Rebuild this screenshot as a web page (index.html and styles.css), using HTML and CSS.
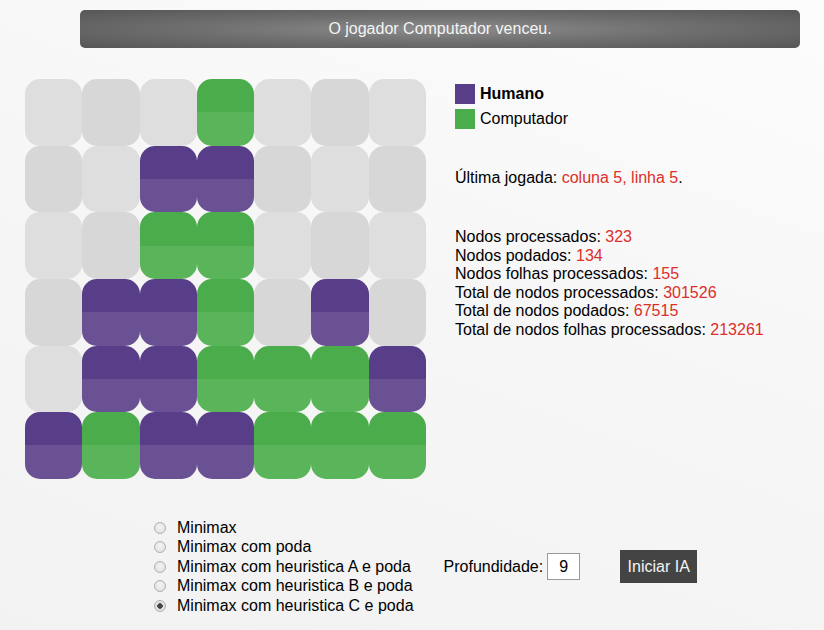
FILE: index.html
```html
<!DOCTYPE html>
<html lang="pt">
<head>
<meta charset="utf-8">
<title>Connect 4</title>
<link rel="stylesheet" href="styles.css">
</head>
<body>
<div class="banner">O jogador Computador venceu.</div>
<div class="main">
  <div class="board">
    <div class="cell e-a"></div><div class="cell e-b"></div><div class="cell e-a"></div><div class="cell g"></div><div class="cell e-a"></div><div class="cell e-b"></div><div class="cell e-a"></div>
    <div class="cell e-b"></div><div class="cell e-a"></div><div class="cell p"></div><div class="cell p"></div><div class="cell e-b"></div><div class="cell e-a"></div><div class="cell e-b"></div>
    <div class="cell e-a"></div><div class="cell e-b"></div><div class="cell g"></div><div class="cell g"></div><div class="cell e-a"></div><div class="cell e-b"></div><div class="cell e-a"></div>
    <div class="cell e-b"></div><div class="cell p"></div><div class="cell p"></div><div class="cell g"></div><div class="cell e-b"></div><div class="cell p"></div><div class="cell e-b"></div>
    <div class="cell e-a"></div><div class="cell p"></div><div class="cell p"></div><div class="cell g"></div><div class="cell g"></div><div class="cell g"></div><div class="cell p"></div>
    <div class="cell p"></div><div class="cell g"></div><div class="cell p"></div><div class="cell p"></div><div class="cell g"></div><div class="cell g"></div><div class="cell g"></div>
  </div>
  <div class="info">
    <div class="legend">
      <div class="legend-row"><span class="swatch swatch-p"></span><b>Humano</b></div>
      <div class="legend-row"><span class="swatch swatch-g"></span>Computador</div>
    </div>
    <div class="last">Última jogada: <span class="red">coluna 5, linha 5</span>.</div>
    <div class="stats">
      <div>Nodos processados: <span class="red">323</span></div>
      <div>Nodos podados: <span class="red">134</span></div>
      <div>Nodos folhas processados: <span class="red">155</span></div>
      <div>Total de nodos processados: <span class="red">301526</span></div>
      <div>Total de nodos podados: <span class="red">67515</span></div>
      <div>Total de nodos folhas processados: <span class="red">213261</span></div>
    </div>
  </div>
</div>
<div class="controls">
  <div class="options">
    <label class="opt"><input type="radio" name="alg"><span>Minimax</span></label>
    <label class="opt"><input type="radio" name="alg"><span>Minimax com poda</span></label>
    <label class="opt"><input type="radio" name="alg"><span>Minimax com heuristica A e poda</span></label>
    <label class="opt"><input type="radio" name="alg"><span>Minimax com heuristica B e poda</span></label>
    <label class="opt"><input type="radio" name="alg" checked><span>Minimax com heuristica C e poda</span></label>
  </div>
  <label class="depth">Profundidade: <input class="depth-input" type="text" value="9"></label>
  <button class="start">Iniciar IA</button>
</div>
</body>
</html>
```
FILE: styles.css
```css
html, body {
  height: 100%;
}
body {
  margin: 0;
  font-family: "Liberation Sans", Arial, sans-serif;
  font-size: 16px;
  color: #000;
  background: linear-gradient(200deg, #fcfcfc 0%, #f6f6f6 50%, #f2f2f2 100%);
}
.banner {
  margin: 10px 0 0 80px;
  width: 720px;
  height: 38px;
  line-height: 38px;
  border-radius: 5px;
  text-align: center;
  color: #f4f4f4;
  background: radial-gradient(ellipse at center, #8c8c8c 0%, #6e6e6e 50%, #565656 100%);
}
.main {
  display: flex;
  margin-top: 31px;
  padding-left: 25px;
}
.board {
  display: grid;
  grid-template-columns: repeat(7, 1fr);
  grid-template-rows: repeat(6, 1fr);
  width: 401px;
  height: 400px;
}
.cell {
  border-radius: 15px;
}
.e-a { background: #dedede; }
.e-b { background: #d7d7d7; }
.p { background: linear-gradient(to bottom, #583e88 50%, #6a5193 50%); }
.g { background: linear-gradient(to bottom, #4aac4a 50%, #5ab55a 50%); }
.info {
  margin-left: 29px;
  padding-top: 5px;
}
.legend-row {
  display: flex;
  align-items: center;
  height: 20px;
  margin-bottom: 5px;
}
.swatch {
  width: 20px;
  height: 20px;
  margin-right: 5px;
}
.swatch-p { background: #583e88; }
.swatch-g { background: #4aac4a; }
.last {
  margin-top: 40px;
  line-height: 18px;
}
.red { color: #dc2f2a; }
.stats {
  margin-top: 41px;
  line-height: 18.5px;
}
.controls {
  display: flex;
  align-items: center;
  margin-top: 39px;
  padding-left: 154px;
}
.options {
  display: flex;
  flex-direction: column;
}
.opt {
  display: flex;
  align-items: center;
  height: 19.5px;
}
.opt input {
  appearance: none;
  -webkit-appearance: none;
  width: 12px;
  height: 12px;
  margin: 0 11px 0 0;
  border: 1px solid #b0b0b0;
  border-radius: 50%;
  background: radial-gradient(circle at 50% 40%, #f4f4f4 0%, #dcdcdc 100%);
  box-sizing: border-box;
}
.opt input:checked {
  background: radial-gradient(circle, #444 0 2.5px, #e6e6e6 3px, #d4d4d4 100%);
}
.depth {
  display: flex;
  align-items: center;
  margin-left: 30px;
}
.depth-input {
  width: 33px;
  height: 27px;
  margin-left: 4px;
  box-sizing: border-box;
  border: 1px solid #999;
  background: #fff;
  font-family: "Liberation Sans", Arial, sans-serif;
  font-size: 16px;
  text-align: center;
  padding: 0;
}
.start {
  margin-left: 40px;
  width: 77px;
  height: 33px;
  border: 0;
  padding: 0;
  background: #444;
  color: #f4f4f4;
  font-family: "Liberation Sans", Arial, sans-serif;
  font-size: 16px;
}
```
